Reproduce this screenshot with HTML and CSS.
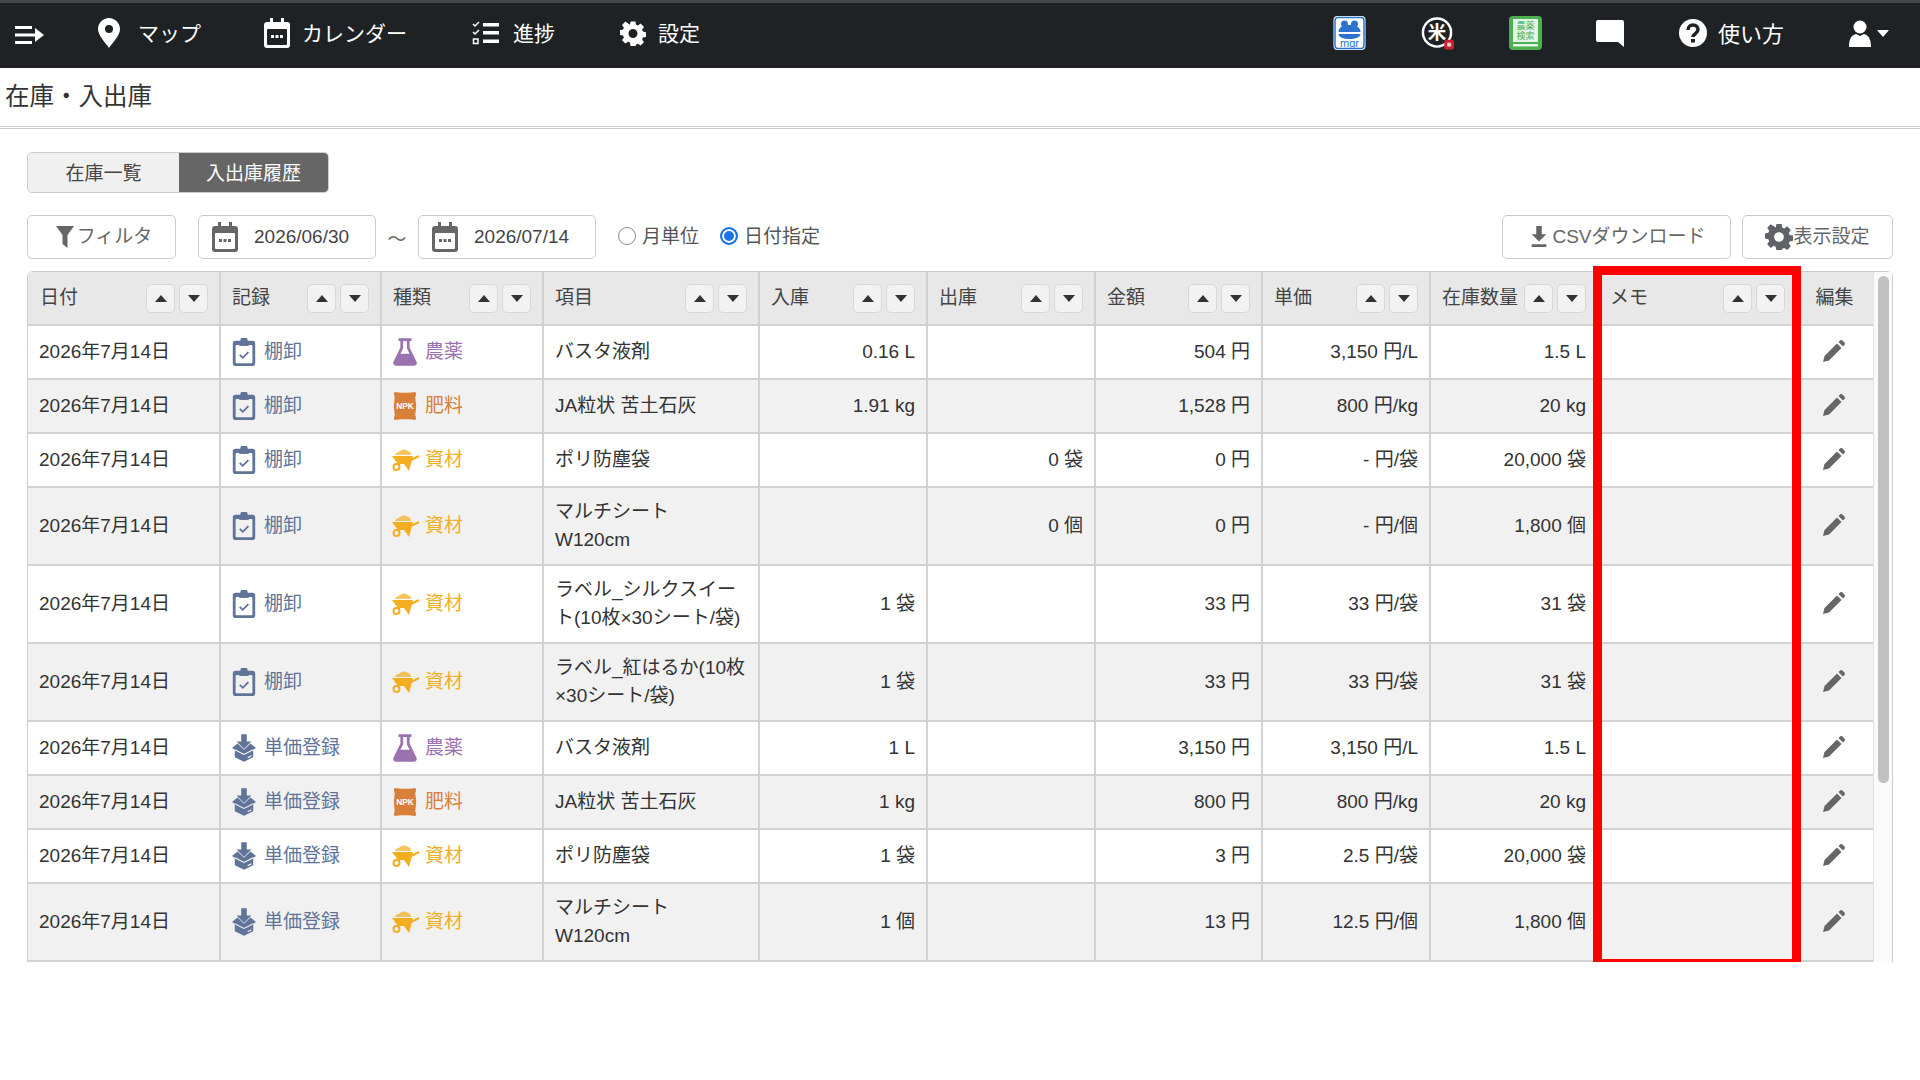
FILE: index.html
```html
<!DOCTYPE html>
<html lang="ja">
<head>
    <meta charset="UTF-8">
    <meta name="viewport" content="width=device-width, initial-scale=1.0">
    <title>在庫・入出庫</title>
    <link rel="stylesheet" href="styles.css">
</head>
<body>
    <svg class="icon-defs" aria-hidden="true">
        <symbol id="i-cal" viewBox="0 0 26 30">
            <path d="M6 0h3v4H17V0h3v4h3a3 3 0 0 1 3 3v20a3 3 0 0 1-3 3H3a3 3 0 0 1-3-3V7a3 3 0 0 1 3-3h3z"/>
            <rect class="hole" x="3" y="11" width="20" height="16" rx="1"/>
            <rect x="7" y="17" width="3" height="3"/><rect x="11.5" y="17" width="3" height="3"/><rect x="16" y="17" width="3" height="3"/>
        </symbol>
        <symbol id="i-gear" viewBox="-1 0 26 24">
            <path fill-rule="evenodd" d="M9.6 0h4.800l.6 3.200 1.900.8 2.700-1.900 3.400 3.400-1.900 2.700.8 1.900 3.100.6v4.800l-3.100.6-.8 1.900 1.900 2.700-3.400 3.400-2.700-1.900-1.900.8-.6 3.100H9.600L9 21l-1.900-.8-2.700 1.900L1 18.700l1.900-2.700-.8-1.900L-1 13.500V8.700l3.100-.6.8-1.900L1 3.500 4.400.1l2.700 1.900L9 3.200zM12 7.500a4.500 4.500 0 1 0 0 9 4.500 4.500 0 0 0 0-9z"/>
        </symbol>
        <symbol id="i-clip" viewBox="0 0 24 30">
            <path d="M8 3a4 4 0 0 1 8 0h5a3 3 0 0 1 3 3v21a3 3 0 0 1-3 3H3a3 3 0 0 1-3-3V6a3 3 0 0 1 3-3z"/>
            <rect class="hole" x="3" y="7.500" width="18" height="19.500" rx="1"/>
            <path d="M7 8.500V5h10v3.500z"/>
            <path class="check" d="M7.500 18l3.200 3.200 6-6"/>
        </symbol>
        <symbol id="i-box" viewBox="0 0 26 30">
            <path d="M10 0h6v8h5l-8 8-8-8h5z"/>
            <path d="M0 15l6-5 7 7 7-7 6 5-3 2v8l-10 5-10-5v-8z"/>
            <path class="cut" d="M3 17l10 5 10-5"/>
            <path class="cut" d="M17 25.500l4-2"/>
        </symbol>
        <symbol id="i-flask" viewBox="0 0 26 30">
            <path d="M6 0h14v3h-2v7l7.500 15.500c1 2.300-.5 4.500-3 4.500H3.500c-2.500 0-4-2.200-3-4.500L8 10V3H6z"/>
            <path class="hole" d="M11 3h4v8l3 6H8l3-6z"/>
        </symbol>
        <symbol id="i-bag" viewBox="0 0 24 30">
            <path d="M1 0c4 1 18 1 22 0l1 2-1 4 1 9-1 10 1 3-1 2c-4-1-18-1-22 0l-1-2 1-3-1-10 1-9-1-4z"/>
            <text class="bag-text" x="12" y="18.500">NPK</text>
        </symbol>
        <symbol id="i-barrow" viewBox="0 0 28 22">
            <path d="M0 7h21l-4 15-5-7H6z"/>
            <path d="M3 6c1-3 4-3 5-4 2-2 6-2 8 0 2 0 3 2 3 4z" opacity=".7"/>
            <path class="line" d="M18 11.500l9-4.500"/>
            <path class="line" d="M9 13l-3 3"/>
            <circle class="ring" cx="4.500" cy="18" r="3"/>
        </symbol>
        <symbol id="i-pen" viewBox="0 0 22 22">
            <path d="M0 22l1.500-6L14 3.500l4.500 4.500L6 20.500z"/>
            <path d="M15.500 2l1.500-1.500c.8-.7 1.700-.7 2.400 0l2 2c.7.700.7 1.600 0 2.400L20 6.500z"/>
        </symbol>
    </svg>

    <header class="topbar">
        <nav class="nav-left">
            <svg class="menu-icon" viewBox="0 0 29 20"><path d="M0 1h17v3H0zM0 8.500h20v3H0zM0 16h17v3H0z"/><path d="M20 3l9 7-9 7z"/></svg>
            <a class="nav-item nav-map"><svg class="pin-icon" viewBox="0 0 22 30"><path fill-rule="evenodd" d="M11 0c6 0 11 5 11 11 0 7-8 14-11 19C8 25 0 18 0 11 0 5 5 0 11 0zm0 7a4 4 0 1 0 0 8 4 4 0 0 0 0-8z"/></svg><span class="nav-text">マップ</span></a>
            <a class="nav-item nav-cal"><svg class="nav-svg"><use href="#i-cal"/></svg><span class="nav-text">カレンダー</span></a>
            <a class="nav-item nav-prog"><svg class="list-icon" viewBox="0 0 27 24"><path d="M11 2h16v3.500H11zM11 10h16v3.500H11zM11 18.500h16V22H11z"/><path class="tick" d="M1 3l2 2 4-4M1 11l2 2 4-4"/><rect class="tick" x="1.500" y="18" width="4.500" height="4.500"/></svg><span class="nav-text">進捗</span></a>
            <a class="nav-item nav-set"><svg class="nav-svg gear"><use href="#i-gear"/></svg><span class="nav-text">設定</span></a>
        </nav>
        <div class="nav-right">
            <svg class="app-icon" viewBox="0 0 32 34">
                <rect width="32" height="34" rx="4" fill="#fff"/>
                <rect x="1.500" y="1.500" width="29" height="31" rx="3" fill="none" stroke="#2c73cf" stroke-width="1.500"/>
                <circle cx="11" cy="8" r="3.500" fill="#2c73cf"/><circle cx="21" cy="8" r="3.500" fill="#2c73cf"/>
                <path d="M5 16c0-5 5-7 11-7s11 2 11 7H5zM5 18h22c0 3-5 5-11 5S5 21 5 18z" fill="#2c73cf"/>
                <text class="mgr" x="16" y="31">mgr</text>
            </svg>
            <svg class="app-icon" viewBox="0 0 34 34">
                <circle cx="16.500" cy="16.500" r="14.500" fill="#1e2225" stroke="#fff" stroke-width="2.500"/>
                <text class="kome" x="16.500" y="23">米</text>
                <rect x="24" y="24" width="10" height="10" rx="2" fill="#c8202f"/>
                <rect x="27" y="27" width="4" height="4" fill="#f3c4c8"/>
            </svg>
            <svg class="app-icon" viewBox="0 0 33 34">
                <rect width="33" height="34" rx="4" fill="#4caf50"/>
                <rect x="4" y="3" width="25" height="23" fill="#e6f4e7"/>
                <rect x="4" y="28" width="25" height="2.500" fill="#e6f4e7"/>
                <text class="book" x="16.500" y="13">農薬</text>
                <text class="book" x="16.500" y="23">検索</text>
            </svg>
            <svg class="chat-icon" viewBox="0 0 28 27"><path d="M2 0h24a2 2 0 0 1 2 2v25l-6-5H2a2 2 0 0 1-2-2V2a2 2 0 0 1 2-2z"/></svg>
            <a class="nav-item nav-help"><svg class="help-icon" viewBox="0 0 28 28"><circle cx="14" cy="14" r="14"/><path class="q" d="M9 11c0-3 2-5 5-5s5 2 5 4.500c0 4-5 4-5 7.500"/><rect class="qd" x="12" y="20" width="4" height="3.500"/></svg><span class="nav-text">使い方</span></a>
            <a class="user-menu"><svg class="user-icon" viewBox="0 0 22 27"><circle cx="11" cy="7" r="6.500"/><path d="M0 27c0-9 3-12 7-13l4 2 4-2c4 1 7 4 7 13z"/></svg><span class="caret"></span></a>
        </div>
    </header>

    <div class="page-title">在庫・入出庫</div>

    <main class="content">
        <div class="tabs">
            <a class="tab">在庫一覧</a>
            <a class="tab active">入出庫履歴</a>
        </div>

        <div class="toolbar">
            <button class="btn btn-filter"><svg class="btn-svg" viewBox="0 0 18 22"><path d="M0 0h18l-6.500 9v13l-5-4V9z"/></svg>フィルタ</button>
            <div class="date-box"><svg class="date-svg"><use href="#i-cal"/></svg>2026/06/30</div>
            <span class="tilde">〜</span>
            <div class="date-box"><svg class="date-svg"><use href="#i-cal"/></svg>2026/07/14</div>
            <label class="radio"><span class="radio-dot"></span>月単位</label>
            <label class="radio"><span class="radio-dot checked"></span>日付指定</label>
            <div class="toolbar-right">
                <button class="btn btn-csv"><svg class="btn-svg" viewBox="0 0 18 24"><path d="M6 0h6v9h5l-8 8-8-8h5zM1 20h16v3H1z"/></svg>CSVダウンロード</button>
                <button class="btn btn-view"><svg class="view-gear"><use href="#i-gear"/></svg>表示設定</button>
            </div>
        </div>

        <div class="table-wrap">
            <table class="stock-table">
                <colgroup>
                    <col class="c-date"><col class="c-rec"><col class="c-kind"><col class="c-item">
                    <col class="c-num"><col class="c-num"><col class="c-amt"><col class="c-num"><col class="c-num">
                    <col class="c-memo"><col class="c-edit">
                </colgroup>
                <thead>
                    <tr>
                        <th><div class="th-in">日付<span class="sort"><i class="up"></i><i class="down"></i></span></div></th>
                        <th><div class="th-in">記録<span class="sort"><i class="up"></i><i class="down"></i></span></div></th>
                        <th><div class="th-in">種類<span class="sort"><i class="up"></i><i class="down"></i></span></div></th>
                        <th><div class="th-in">項目<span class="sort"><i class="up"></i><i class="down"></i></span></div></th>
                        <th><div class="th-in">入庫<span class="sort"><i class="up"></i><i class="down"></i></span></div></th>
                        <th><div class="th-in">出庫<span class="sort"><i class="up"></i><i class="down"></i></span></div></th>
                        <th><div class="th-in">金額<span class="sort"><i class="up"></i><i class="down"></i></span></div></th>
                        <th><div class="th-in">単価<span class="sort"><i class="up"></i><i class="down"></i></span></div></th>
                        <th><div class="th-in">在庫数量<span class="sort"><i class="up"></i><i class="down"></i></span></div></th>
                        <th><div class="th-in">メモ<span class="sort"><i class="up"></i><i class="down"></i></span></div></th>
                        <th class="center">編集</th>
                    </tr>
                </thead>
                <tbody>
                    <tr>
                        <td>2026年7月14日</td>
                        <td><span class="tag rec"><svg class="tag-svg"><use href="#i-clip"/></svg>棚卸</span></td>
                        <td><span class="tag agri"><svg class="tag-svg"><use href="#i-flask"/></svg>農薬</span></td>
                        <td>バスタ液剤</td>
                        <td class="num">0.16 L</td><td class="num"></td><td class="num">504 円</td><td class="num">3,150 円/L</td><td class="num">1.5 L</td>
                        <td></td><td class="center"><svg class="pen"><use href="#i-pen"/></svg></td>
                    </tr>
                    <tr>
                        <td>2026年7月14日</td>
                        <td><span class="tag rec"><svg class="tag-svg"><use href="#i-clip"/></svg>棚卸</span></td>
                        <td><span class="tag fert"><svg class="tag-svg"><use href="#i-bag"/></svg>肥料</span></td>
                        <td>JA粒状 苦土石灰</td>
                        <td class="num">1.91 kg</td><td class="num"></td><td class="num">1,528 円</td><td class="num">800 円/kg</td><td class="num">20 kg</td>
                        <td></td><td class="center"><svg class="pen"><use href="#i-pen"/></svg></td>
                    </tr>
                    <tr>
                        <td>2026年7月14日</td>
                        <td><span class="tag rec"><svg class="tag-svg"><use href="#i-clip"/></svg>棚卸</span></td>
                        <td><span class="tag mat"><svg class="tag-svg"><use href="#i-barrow"/></svg>資材</span></td>
                        <td>ポリ防塵袋</td>
                        <td class="num"></td><td class="num">0 袋</td><td class="num">0 円</td><td class="num">- 円/袋</td><td class="num">20,000 袋</td>
                        <td></td><td class="center"><svg class="pen"><use href="#i-pen"/></svg></td>
                    </tr>
                    <tr class="tall">
                        <td>2026年7月14日</td>
                        <td><span class="tag rec"><svg class="tag-svg"><use href="#i-clip"/></svg>棚卸</span></td>
                        <td><span class="tag mat"><svg class="tag-svg"><use href="#i-barrow"/></svg>資材</span></td>
                        <td>マルチシート<br>W120cm</td>
                        <td class="num"></td><td class="num">0 個</td><td class="num">0 円</td><td class="num">- 円/個</td><td class="num">1,800 個</td>
                        <td></td><td class="center"><svg class="pen"><use href="#i-pen"/></svg></td>
                    </tr>
                    <tr class="tall">
                        <td>2026年7月14日</td>
                        <td><span class="tag rec"><svg class="tag-svg"><use href="#i-clip"/></svg>棚卸</span></td>
                        <td><span class="tag mat"><svg class="tag-svg"><use href="#i-barrow"/></svg>資材</span></td>
                        <td>ラベル_シルクスイー<br>ト(10枚×30シート/袋)</td>
                        <td class="num">1 袋</td><td class="num"></td><td class="num">33 円</td><td class="num">33 円/袋</td><td class="num">31 袋</td>
                        <td></td><td class="center"><svg class="pen"><use href="#i-pen"/></svg></td>
                    </tr>
                    <tr class="tall">
                        <td>2026年7月14日</td>
                        <td><span class="tag rec"><svg class="tag-svg"><use href="#i-clip"/></svg>棚卸</span></td>
                        <td><span class="tag mat"><svg class="tag-svg"><use href="#i-barrow"/></svg>資材</span></td>
                        <td>ラベル_紅はるか(10枚<br>×30シート/袋)</td>
                        <td class="num">1 袋</td><td class="num"></td><td class="num">33 円</td><td class="num">33 円/袋</td><td class="num">31 袋</td>
                        <td></td><td class="center"><svg class="pen"><use href="#i-pen"/></svg></td>
                    </tr>
                    <tr>
                        <td>2026年7月14日</td>
                        <td><span class="tag rec"><svg class="tag-svg"><use href="#i-box"/></svg>単価登録</span></td>
                        <td><span class="tag agri"><svg class="tag-svg"><use href="#i-flask"/></svg>農薬</span></td>
                        <td>バスタ液剤</td>
                        <td class="num">1 L</td><td class="num"></td><td class="num">3,150 円</td><td class="num">3,150 円/L</td><td class="num">1.5 L</td>
                        <td></td><td class="center"><svg class="pen"><use href="#i-pen"/></svg></td>
                    </tr>
                    <tr>
                        <td>2026年7月14日</td>
                        <td><span class="tag rec"><svg class="tag-svg"><use href="#i-box"/></svg>単価登録</span></td>
                        <td><span class="tag fert"><svg class="tag-svg"><use href="#i-bag"/></svg>肥料</span></td>
                        <td>JA粒状 苦土石灰</td>
                        <td class="num">1 kg</td><td class="num"></td><td class="num">800 円</td><td class="num">800 円/kg</td><td class="num">20 kg</td>
                        <td></td><td class="center"><svg class="pen"><use href="#i-pen"/></svg></td>
                    </tr>
                    <tr>
                        <td>2026年7月14日</td>
                        <td><span class="tag rec"><svg class="tag-svg"><use href="#i-box"/></svg>単価登録</span></td>
                        <td><span class="tag mat"><svg class="tag-svg"><use href="#i-barrow"/></svg>資材</span></td>
                        <td>ポリ防塵袋</td>
                        <td class="num">1 袋</td><td class="num"></td><td class="num">3 円</td><td class="num">2.5 円/袋</td><td class="num">20,000 袋</td>
                        <td></td><td class="center"><svg class="pen"><use href="#i-pen"/></svg></td>
                    </tr>
                    <tr class="tall">
                        <td>2026年7月14日</td>
                        <td><span class="tag rec"><svg class="tag-svg"><use href="#i-box"/></svg>単価登録</span></td>
                        <td><span class="tag mat"><svg class="tag-svg"><use href="#i-barrow"/></svg>資材</span></td>
                        <td>マルチシート<br>W120cm</td>
                        <td class="num">1 個</td><td class="num"></td><td class="num">13 円</td><td class="num">12.5 円/個</td><td class="num">1,800 個</td>
                        <td></td><td class="center"><svg class="pen"><use href="#i-pen"/></svg></td>
                    </tr>
                </tbody>
            </table>
            <div class="scroll-track"><div class="scroll-thumb"></div></div>
            <div class="memo-highlight"></div>
        </div>
    </main>
</body>
</html>
```

FILE: styles.css
```css
* {
    margin: 0;
    padding: 0;
    box-sizing: border-box;
}

body {
    background: #fff;
    color: #333;
    font-family: "Liberation Sans", "Noto Sans CJK JP", sans-serif;
    font-size: 19px;
}

.icon-defs {
    display: none;
}

/* holes in the icons follow the colour behind them */
.hole {
    fill: var(--hole, #1e2225);
}

/* top bar */
.topbar {
    height: 68px;
    border-top: 3px solid #45484a;
    padding-bottom: 5px;
    background: #1e2225;
    color: #fff;
    display: flex;
    align-items: center;
    justify-content: space-between;
    fill: #fff;
    font-size: 21px;
}

.nav-left,
.nav-right,
.nav-item {
    display: flex;
    align-items: center;
}

.nav-left {
    padding-left: 15px;
}

.nav-text {
    margin-top: -3px;
}

.menu-icon {
    width: 29px;
    height: 20px;
    margin-top: 4px;
}

.nav-map { margin-left: 54px; gap: 18px; }
.nav-cal { margin-left: 63px; gap: 12px; }
.nav-prog { margin-left: 65px; gap: 14px; }
.nav-set { margin-left: 65px; gap: 12px; }

.pin-icon {
    width: 22px;
    height: 30px;
}

.nav-svg {
    width: 26px;
    height: 30px;
}

.nav-svg.gear {
    width: 26px;
    height: 25px;
}

.list-icon {
    width: 27px;
    height: 24px;
}

.tick {
    fill: none;
    stroke: #fff;
    stroke-width: 1.5;
}

.nav-right {
    padding-right: 31px;
}

.app-icon {
    width: 33px;
    height: 34px;
    margin-right: 55px;
}

.mgr {
    fill: #2c73cf;
    font-size: 11px;
    text-anchor: middle;
}

.kome {
    fill: #fff;
    font-size: 19px;
    font-weight: bold;
    text-anchor: middle;
}

.book {
    fill: #4caf50;
    font-size: 9px;
    text-anchor: middle;
}

.chat-icon {
    width: 28px;
    height: 27px;
    margin-left: -1px;
    margin-right: 55px;
}

.nav-help {
    gap: 11px;
    font-size: 22px;
}

.help-icon {
    width: 28px;
    height: 28px;
}

.q {
    fill: none;
    stroke: #1e2225;
    stroke-width: 3.5;
}

.qd {
    fill: #1e2225;
}

.user-menu {
    display: flex;
    align-items: center;
    gap: 6px;
    margin-left: 65px;
}

.user-icon {
    width: 22px;
    height: 27px;
}

.caret {
    border-left: 6.5px solid transparent;
    border-right: 6.5px solid transparent;
    border-top: 7px solid #fff;
}

/* title */
.page-title {
    height: 61px;
    padding: 0 5px;
    border-bottom: 3px double #ccc;
    font-size: 24.5px;
    line-height: 58px;
    color: #333;
}

.content {
    padding: 23px 27px 0;
}

.tabs {
    display: flex;
    width: 302px;
    height: 41px;
    border: 1px solid #ccc;
    border-radius: 5px;
    overflow: hidden;
}

.tab {
    display: flex;
    align-items: center;
    justify-content: center;
    width: 151px;
    padding-bottom: 2px;
    background: #f0f0f0;
    color: #444;
}

.tab.active {
    width: 149px;
    background: #666;
    color: #fff;
}

/* toolbar */
.toolbar {
    display: flex;
    align-items: center;
    height: 44px;
    margin-top: 22px;
    color: #555;
}

.btn {
    display: flex;
    align-items: center;
    justify-content: center;
    height: 44px;
    padding-bottom: 5px;
    background: #fff;
    border: 1px solid #ccc;
    border-radius: 5px;
    color: #666;
    font: inherit;
}

.btn-svg {
    width: 18px;
    height: 22px;
    margin-top: 5px;
    fill: #666;
}

.btn-filter {
    width: 149px;
    padding-left: 5px;
    gap: 3px;
}

.date-box {
    display: flex;
    align-items: center;
    width: 178px;
    height: 44px;
    padding-left: 13px;
    gap: 16px;
    border: 1px solid #ccc;
    border-radius: 5px;
    color: #444;
    fill: #666;
    --hole: #fff;
}

.btn-filter + .date-box {
    margin-left: 22px;
}

.date-svg {
    width: 26px;
    height: 30px;
}

.tilde {
    width: 42px;
    text-align: center;
    color: #666;
}

.radio {
    display: flex;
    align-items: center;
    gap: 6px;
    margin-left: 22px;
    padding-bottom: 5px;
}

.radio + .radio {
    margin-left: 21px;
}

.radio-dot {
    width: 18px;
    height: 18px;
    margin-top: 3px;
    border: 1.5px solid #888;
    border-radius: 50%;
}

.radio-dot.checked {
    border: 2px solid #1a73e8;
    background: #1a73e8;
    box-shadow: inset 0 0 0 2px #fff;
}

.toolbar-right {
    display: flex;
    gap: 11px;
    margin-left: auto;
}

.btn-csv {
    width: 229px;
    padding-left: 3px;
    gap: 4px;
}

.btn-view {
    width: 151px;
}

.view-gear {
    width: 28px;
    height: 26px;
    margin-top: 5px;
    fill: #5f6368;
}

/* table */
.table-wrap {
    position: relative;
    display: flex;
    width: 1866px;
    margin-top: 12px;
    border: 1px solid #ccc;
    border-bottom: none;
    border-radius: 6px 6px 0 0;
}

.stock-table {
    width: 1845px;
    table-layout: fixed;
    border-collapse: separate;
    border-spacing: 0;
    --hole: #fff;
}

.c-date { width: 193px; }
.c-rec { width: 161px; }
.c-kind { width: 162px; }
.c-item { width: 216px; }
.c-num { width: 168px; }
.c-amt { width: 167px; }
.c-memo { width: 199px; }
.c-edit { width: 75px; }

th,
td {
    padding: 10px 11px;
    border-right: 2px solid #d2d2d2;
    border-bottom: 2px solid #d2d2d2;
    line-height: 28px;
    text-align: left;
    vertical-align: middle;
    font-weight: normal;
    white-space: nowrap;
}

th:last-child,
td:last-child {
    border-right: none;
}

th {
    height: 54px;
    padding: 0 11px;
    background: #e8e8e8;
    color: #444;
}

th:first-child {
    padding-left: 12px;
}

td {
    height: 54px;
    color: #333;
}

.tall td {
    height: 78px;
}

tbody tr:nth-child(even) td {
    background: #f1f1f1;
    --hole: #f1f1f1;
}

.num {
    text-align: right;
}

th.center {
    padding-left: 0;
    padding-right: 2px;
    text-align: center;
}

td.center {
    padding: 9px 4px 12px 0;
    text-align: center;
}

.th-in {
    display: flex;
    align-items: center;
    justify-content: space-between;
}

.sort {
    display: flex;
    gap: 4px;
}

.sort i {
    display: flex;
    align-items: center;
    justify-content: center;
    width: 29px;
    height: 29px;
    background: #f2f2f2;
    border: 1px solid #d8d8d8;
    border-radius: 5px;
}

.sort i::before {
    content: "";
    border-left: 6px solid transparent;
    border-right: 6px solid transparent;
}

.sort .up::before {
    border-bottom: 7px solid #333;
}

.sort .down::before {
    border-top: 7px solid #333;
}

.tag {
    display: flex;
    align-items: center;
    gap: 8px;
}

.tag-svg {
    width: 24px;
    height: 28px;
    flex-shrink: 0;
}

.mat .tag-svg {
    width: 28px;
    height: 22px;
    margin-left: -1px;
    margin-right: -3px;
}

.rec { color: #5f7498; fill: #5f7498; }
.agri { color: #9b72b0; fill: #9b72b0; }
.fert { color: #d87f3a; fill: #d87f3a; }
.mat { color: #f3ae20; fill: #f3ae20; }

.check,
.cut {
    fill: none;
    stroke-width: 2;
}

.check { stroke: #5f7498; }

.cut {
    stroke: var(--hole, #fff);
    stroke-width: 1.2;
}

.bag-text {
    fill: #fff;
    font-size: 9px;
    font-weight: bold;
    text-anchor: middle;
}

.line,
.ring {
    fill: none;
    stroke: #f3ae20;
    stroke-width: 2;
}

.pen {
    display: block;
    width: 22px;
    height: 22px;
    margin: 0 auto;
    fill: #666;
}

/* scrollbar */
.scroll-track {
    width: 19px;
    padding: 4px 4px 0;
    background: #fafafa;
    border-left: 1px solid #e4e4e4;
}

.scroll-thumb {
    width: 11px;
    height: 507px;
    background: #c1c1c1;
    border-radius: 6px;
}

/* red box over the memo column */
.memo-highlight {
    position: absolute;
    top: -6px;
    left: 1565px;
    width: 208px;
    height: 702px;
    border: 9px solid #f00;
}
```
